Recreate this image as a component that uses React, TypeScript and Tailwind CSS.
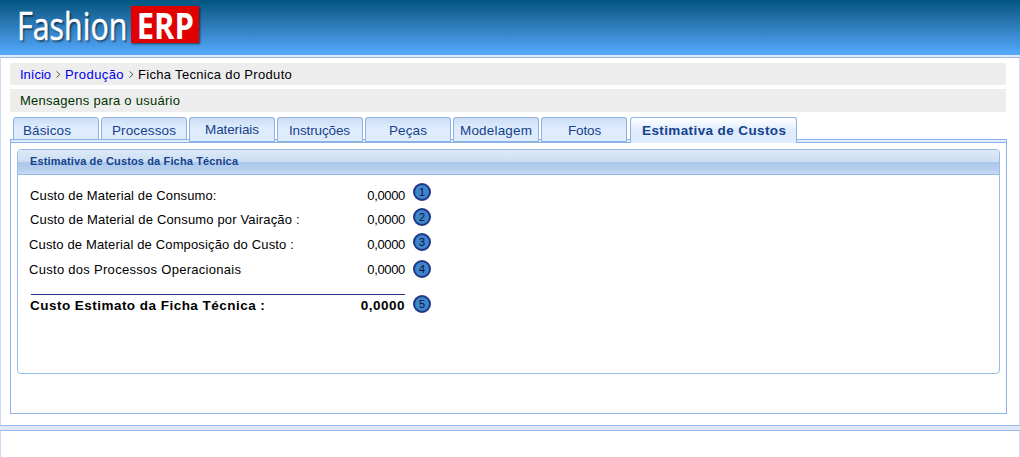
type Tab = { label: string; box: string; text: string };

const tabs: Tab[] = [
  { label: 'Básicos', box: 'h-[23px] w-[86px] pl-[9px] pt-[4px]', text: 'tracking-[0.12px]' },
  { label: 'Processos', box: 'h-[23px] w-[86px] pl-[10px] pt-[4px]', text: 'tracking-[0.12px]' },
  { label: 'Materiais', box: 'h-[26px] w-[86px] border-b-2 pl-[15px] pt-[3px]', text: 'tracking-[-0.1px]' },
  { label: 'Instruções', box: 'h-[26px] w-[86px] border-b-2 pl-[11px] pt-[4px]', text: 'tracking-[-0.14px]' },
  { label: 'Peças', box: 'h-[26px] w-[86px] border-b-2 pl-[23px] pt-[4px]', text: 'tracking-[0.12px]' },
  { label: 'Modelagem', box: 'h-[26px] w-[86px] border-b-2 pl-[6px] pt-[4px]', text: 'tracking-[0.18px]' },
  { label: 'Fotos', box: 'h-[26px] w-[86px] border-b-2 pl-[26px] pt-[4px]', text: 'tracking-[-0.15px]' },
];

const rows = [
  { label: 'Custo de Material de Consumo:', n: 1, text: 'ml-[30px] tracking-[0.13px]', pad: 'pt-[4px]', badge: '' },
  { label: 'Custo de Material de Consumo por Vairação :', n: 2, text: 'ml-[30px] tracking-[0.16px]', pad: 'pt-[3px]', badge: '' },
  { label: 'Custo de Material de Composição do Custo :', n: 3, text: 'ml-[29px] tracking-[0.15px]', pad: 'pt-[3px]', badge: '' },
  { label: 'Custo dos Processos Operacionais', n: 4, text: 'ml-[29px] tracking-[0.29px]', pad: 'pt-[3px]', badge: 'mt-[2px]' },
];

function Badge({ n, className = '' }: { n: number; className?: string }) {
  return (
    <span
      className={`ml-2 flex size-[18px] shrink-0 items-center justify-center rounded-full border-2 border-[#1d3685] bg-[#3f85cd] text-[11px] leading-none text-[#08152d] ${className}`}
    >
      {n}
    </span>
  );
}

function Header() {
  return (
    <header className="h-[58px] border-b border-[#99bbe8] bg-[#dfe8f6]">
      <div className="flex h-[55px] items-start bg-linear-to-b from-[#005580] to-[#55aaff] pl-[17px] font-['Open_Sans',sans-serif] text-white">
        <span className="-mr-[32px] w-[146px] shrink-0 origin-left scale-x-[0.78] text-[39px] leading-[50px] whitespace-nowrap [-webkit-text-stroke:0.5px_white] [text-shadow:2px_2px_2px_rgba(0,0,0,0.5)]">
          Fashion
        </span>
        <span className="mt-[6px] flex h-[37px] w-[68px] items-center justify-center bg-[#e00000] pt-[2px] text-[36px] leading-none font-bold shadow-[1px_1px_2px_rgba(0,0,0,0.6)]">
          <span className="scale-x-[0.86]">ERP</span>
        </span>
      </div>
    </header>
  );
}

function Tabs() {
  return (
    <nav className="relative z-10 flex h-[22px] items-start gap-[2px] pl-[3px] text-[13.5px] leading-[18px] text-[#15428b]">
      {tabs.map((t) => (
        <div
          key={t.label}
          className={`shrink-0 rounded-t-[3px] border border-[#8db2e3] bg-linear-to-b from-[#ccddf4] to-[#deecfd] to-45% whitespace-nowrap ${t.box}`}
        >
          <span className={t.text}>{t.label}</span>
        </div>
      ))}
      <div className="ml-px h-[26px] w-[167px] shrink-0 rounded-t-[3px] border border-b-0 border-[#8db2e3] bg-linear-to-b from-white to-[#deecfd] to-50% pt-[4px] pl-[11px] text-[13.5px] font-bold whitespace-nowrap">
        <span className="tracking-[0.39px]">Estimativa de Custos</span>
      </div>
    </nav>
  );
}

function CostPanel() {
  return (
    <section className="mx-[6px] mt-[6px] h-[225px] rounded-[4px] border border-[#99bbe8] bg-white">
      <h2 className="h-[25px] rounded-t-[3px] border-b border-[#99bbe8] bg-[linear-gradient(#dce9f7_0,#cddef3_12px,#abc7ec_12px,#b8d0ef_20px,#c8daf3_24px)] pl-[12px] text-[11px] leading-[22px] font-bold tracking-[0.14px] text-[#15428b]">
        Estimativa de Custos da Ficha Técnica
      </h2>
      <div className="-ml-[18px] pt-[8px] text-[13px] leading-[18px] text-black">
        {rows.map((r) => (
          <div key={r.n} className="flex h-[25px] items-start">
            <div className={`flex w-[405px] justify-between whitespace-nowrap ${r.pad}`}>
              <span className={r.text}>{r.label}</span>
              <span className="tracking-[-0.35px]">0,0000</span>
            </div>
            <Badge n={r.n} className={r.badge} />
          </div>
        ))}
        <div className="mt-[11px] flex items-start font-bold">
          <div className="ml-[31px] flex w-[374px] justify-between border-t border-[#1d3685] pt-[2px] text-[13.5px] whitespace-nowrap">
            <span className="-ml-px tracking-[0.47px]">Custo Estimato da Ficha Técnica :</span>
            <span className="tracking-[0.5px]">0,0000</span>
          </div>
          <Badge n={5} className="mt-px font-normal" />
        </div>
      </div>
    </section>
  );
}

export default function App() {
  return (
    <div className="flex h-[457px] w-[1020px] flex-col overflow-hidden bg-white font-['Liberation_Sans',Arial,sans-serif]">
      <Header />
      <main className="h-[367px] border-x border-[#c9daf2] pt-[5px] pr-[12px] pl-[9px]">
        <div className="flex h-[22px] w-[996px] items-center bg-[#ededed] pl-[10px] text-[13px] leading-[22px]">
          <a className="w-[36px] pt-px text-[#0000ee]">Início</a>
          <svg viewBox="0 0 5 8" className="mr-[4px] h-[8px] w-[5px] fill-none stroke-[#555]"><path d="M.5 1.5 4 4.5 .5 7.5" /></svg>
          <a className="w-[64px] pt-px tracking-[0.42px] text-[#0000ee]">Produção</a>
          <svg viewBox="0 0 5 8" className="mr-[4px] h-[8px] w-[5px] fill-none stroke-[#555]"><path d="M.5 1.5 4 4.5 .5 7.5" /></svg>
          <span className="pt-px tracking-[0.32px] text-black">Ficha Tecnica do Produto</span>
        </div>
        <div className="mt-[4px] h-[23px] w-[996px] bg-[#ededed] pt-px pl-[10px] text-[13px] leading-[22px] tracking-[0.26px] text-[#003300]">
          Mensagens para o usuário
        </div>
        <div className="mt-[5px] w-[997px]">
          <Tabs />
          <div className="h-[275px] border border-[#8db2e3]">
            <div className="h-[3px] border-b border-[#8db2e3] bg-[#deecfd]" />
            <CostPanel />
          </div>
        </div>
      </main>
      <div className="h-[6px] shrink-0 border-y border-[#99bbe8] bg-[#dfe8f6]" />
      <footer className="flex-1 border-x border-[#c9daf2]" />
    </div>
  );
}
